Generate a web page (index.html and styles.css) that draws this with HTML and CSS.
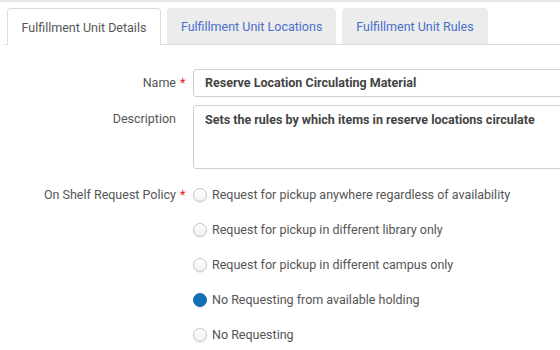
FILE: index.html
```html
<!DOCTYPE html>
<html>
<head>
<meta charset="utf-8">
<link rel="stylesheet" href="styles.css">
</head>
<body>
<div class="topline"></div>
<div class="tabs">
  <div class="tab active">Fulfillment Unit Details</div>
  <div class="tab">Fulfillment Unit Locations</div>
  <div class="tab">Fulfillment Unit Rules</div>
</div>
<div class="form">
  <div class="row">
    <div class="label">Name<span class="req">*</span></div>
    <div class="field"><div class="input">Reserve Location Circulating Material</div></div>
  </div>
  <div class="row">
    <div class="label">Description</div>
    <div class="field"><div class="textarea">Sets the rules by which items in reserve locations circulate</div></div>
  </div>
  <div class="row radios-row">
    <div class="label label-radio">On Shelf Request Policy<span class="req">*</span></div>
    <div class="field radios">
      <div class="radio"><span class="dot"></span>Request for pickup anywhere regardless of availability</div>
      <div class="radio"><span class="dot"></span>Request for pickup in different library only</div>
      <div class="radio"><span class="dot"></span>Request for pickup in different campus only</div>
      <div class="radio"><span class="dot checked"></span>No Requesting from available holding</div>
      <div class="radio"><span class="dot"></span>No Requesting</div>
    </div>
  </div>
</div>
</body>
</html>
```
FILE: styles.css
```css
html, body {
  margin: 0;
  padding: 0;
  background: #fff;
  font-family: Roboto, "Liberation Sans", sans-serif;
  overflow: hidden;
}
.topline {
  height: 2px;
  background: #e6e6e6;
}
.tabs {
  display: flex;
  gap: 6px;
  margin: 6px 0 0 4px;
  padding-left: 3px;
  border-bottom: 1px solid #dcdcdc;
  height: 36px;
}
.tab {
  box-sizing: border-box;
  height: 36px;
  padding: 0 14px;
  display: flex;
  align-items: center;
  font-size: 12.5px;
  color: #4a6fc9;
  background: #ececec;
  border-radius: 4px 4px 0 0;
}
.tab.active {
  background: #fff;
  color: #555;
  border: 1px solid #dcdcdc;
  border-bottom: none;
  height: 37px;
  margin-bottom: -1px;
  padding: 0 13.5px;
}
.form {
  padding-top: 24px;
}
.row {
  display: grid;
  grid-template-columns: 176px 1fr;
  column-gap: 17px;
  margin-bottom: 8px;
}
.label {
  position: relative;
  text-align: right;
  font-size: 12.5px;
  color: #555;
  padding-top: 6px;
}
.req {
  position: absolute;
  left: 180px;
  color: #e02020;
}
.label-radio {
  padding-top: 0;
  line-height: 35px;
}
.input, .textarea {
  box-sizing: border-box;
  border: 1px solid #cfcfcf;
  border-radius: 3px;
  font-size: 12.5px;
  font-weight: bold;
  color: #444;
  margin-right: -20px;
  padding: 0 11px;
}
.input {
  height: 28px;
  line-height: 26px;
}
.textarea {
  height: 64px;
  padding-top: 6px;
  line-height: 16px;
}
.radios-row {
  margin-top: 1px;
}
.radios {
  display: flex;
  flex-direction: column;
}
.radio {
  display: flex;
  align-items: center;
  height: 35px;
  font-size: 12.5px;
  color: #555;
}
.dot {
  box-sizing: border-box;
  width: 14px;
  height: 14px;
  border-radius: 50%;
  border: 1px solid #c4c4c4;
  background: linear-gradient(#fff, #f0f0f0);
  box-shadow: 0 1px 1px rgba(0,0,0,0.08);
  margin-right: 5px;
  flex: none;
}
.dot.checked {
  background: #0f6fb2;
  border-color: #0f6fb2;
}
```
